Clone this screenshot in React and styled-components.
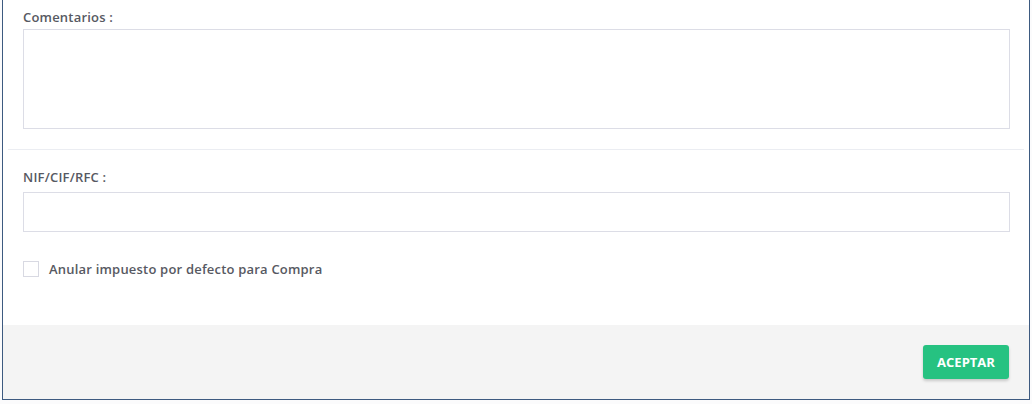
import React from "react"
import styled, { createGlobalStyle } from "styled-components"

const Global = createGlobalStyle`
  html, body {
    margin: 0;
    padding: 0;
    background: #fbfbfc;
    font-family: "Open Sans", "Liberation Sans", sans-serif;
  }
`

const Page = styled.div`
  width: 1032px;
  height: 404px;
  overflow: hidden;
`

const Modal = styled.div`
  margin-left: 2px;
  width: 1026px;
  height: 399px;
  background: #fff;
  border: 1px solid #3d5a80;
  border-top: none;
  display: flex;
  flex-direction: column;
`

const Section = styled.div`
  padding: ${p => p.$pad};
`

const Divider = styled.hr`
  margin: 0 5px;
  border: none;
  border-top: 1px solid #ebedf2;
`

const Label = styled.label`
  display: block;
  font-size: 13px;
  line-height: 20px;
  font-weight: 600;
  letter-spacing: 0.2px;
  color: #575962;
  margin-bottom: ${p => p.$gap || 2}px;
`

const TextArea = styled.textarea`
  display: block;
  box-sizing: border-box;
  width: 100%;
  height: 100px;
  border: 1px solid #dcdde6;
  border-radius: 0;
  resize: none;
  outline: none;
  margin: 0;
`

const Input = styled.input`
  display: block;
  box-sizing: border-box;
  width: 100%;
  height: 40px;
  border: 1px solid #dcdde6;
  border-radius: 0;
  outline: none;
  margin: 0;
`

const CheckRow = styled.label`
  display: flex;
  align-items: center;
  gap: 10px;
  margin-top: 28px;
  font-size: 13px;
  font-weight: 600;
  letter-spacing: 0.2px;
  color: #575962;
`

const Box = styled.span`
  width: 14px;
  height: 14px;
  border: 1px solid #d8d9e2;
  background: #fff;
  flex: none;
`

const Footer = styled.div`
  margin-top: auto;
  background: #f4f4f4;
  height: 74px;
  box-sizing: border-box;
  padding: 20px 20px 20px 0;
  display: flex;
  justify-content: flex-end;
  align-items: flex-start;
`

const Button = styled.button`
  width: 86px;
  height: 34px;
  padding: 0;
  border: none;
  border-radius: 3px;
  background: #26c281;
  color: #fff;
  font-family: "Open Sans", "Liberation Sans", sans-serif;
  font-size: 13px;
  font-weight: 700;
  box-shadow: 0 2px 3px rgba(0, 0, 0, 0.18);
  cursor: pointer;
`

export default function App() {
  return (
    <Page>
      <Global />
      <Modal>
        <Section $pad="7px 19px 20px 20px">
          <Label>Comentarios :</Label>
          <TextArea />
        </Section>
        <Divider />
        <Section $pad="17px 19px 0 20px">
          <Label $gap={5}>NIF/CIF/RFC :</Label>
          <Input />
          <CheckRow>
            <Box />
            Anular impuesto por defecto para Compra
          </CheckRow>
        </Section>
        <Footer>
          <Button>ACEPTAR</Button>
        </Footer>
      </Modal>
    </Page>
  )
}
